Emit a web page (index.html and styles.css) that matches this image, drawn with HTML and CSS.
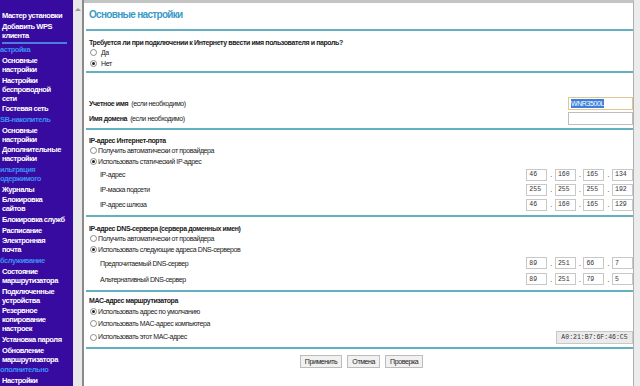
FILE: index.html
```html
<!DOCTYPE html>
<html lang="ru">
<head>
  <meta charset="UTF-8">
  <title>Основные настройки</title>
  <link rel="stylesheet" href="styles.css">
</head>
<body>
  <div class="page">
    <div class="nav">
      <div class="item">Мастер установки</div>
      <div class="item">Добавить WPS<br>клиента</div>
      <div class="sep"></div>
      <div class="head">астройка</div>
      <div class="item">Основные<br>настройки</div>
      <div class="item">Настройки<br>беспроводной<br>сети</div>
      <div class="item">Гостевая сеть</div>
      <div class="head">SB-накопитель</div>
      <div class="item">Основные<br>настройки</div>
      <div class="item">Дополнительные<br>настройки</div>
      <div class="head">ильтрация<br>одержимого</div>
      <div class="item">Журналы</div>
      <div class="item">Блокировка<br>сайтов</div>
      <div class="item">Блокировка служб</div>
      <div class="item">Расписание</div>
      <div class="item">Электронная<br>почта</div>
      <div class="head">бслуживание</div>
      <div class="item">Состояние<br>маршрутизатора</div>
      <div class="item">Подключенные<br>устройства</div>
      <div class="item">Резервное<br>копирование<br>настроек</div>
      <div class="item">Установка пароля</div>
      <div class="item">Обновление<br>маршрутизатора</div>
      <div class="head">ополнительно</div>
      <div class="item">Настройки</div>
    </div>
    <div class="scroll">
      <div class="arrow"></div>
    </div>

    <div class="main">
      <div class="title">Основные настройки</div>
      <div class="line"></div>

      <div class="row q">Требуется ли при подключении к Интернету ввести имя пользователя и пароль?</div>
      <div class="row opt"><span class="radio"></span>Да</div>
      <div class="row opt"><span class="radio on"></span>Нет</div>
      <div class="line"></div>

      <div class="row field first">
        <span><b>Учетное имя</b>&nbsp; (если необходимо)</span>
        <span class="text focus"><span class="sel">WNR3500L</span></span>
      </div>
      <div class="row field">
        <span><b>Имя домена</b>&nbsp; (если необходимо)</span>
        <span class="text"></span>
      </div>
      <div class="line"></div>

      <div class="row q sub">IP-адрес Интернет-порта</div>
      <div class="row opt sm"><span class="radio"></span>Получить автоматически от провайдера</div>
      <div class="row opt sm"><span class="radio on"></span>Использовать статический IP-адрес</div>
      <div class="row ip">
        <span class="label">IP-адрес</span>
        <span class="quad"><span class="box">46</span>.<span class="box">160</span>.<span class="box">165</span>.<span class="box">134</span></span>
      </div>
      <div class="row ip">
        <span class="label">IP-маска подсети</span>
        <span class="quad"><span class="box">255</span>.<span class="box">255</span>.<span class="box">255</span>.<span class="box">192</span></span>
      </div>
      <div class="row ip">
        <span class="label">IP-адрес шлюза</span>
        <span class="quad"><span class="box">46</span>.<span class="box">160</span>.<span class="box">165</span>.<span class="box">129</span></span>
      </div>
      <div class="line"></div>

      <div class="row q sub dns">IP-адрес DNS-сервера (сервера доменных имен)</div>
      <div class="row opt sm"><span class="radio"></span>Получить автоматически от провайдера</div>
      <div class="row opt sm"><span class="radio on"></span>Использовать следующие адреса DNS-серверов</div>
      <div class="row ip tall">
        <span class="label">Предпочитаемый DNS-сервер</span>
        <span class="quad"><span class="box">89</span>.<span class="box">251</span>.<span class="box">66</span>.<span class="box">7</span></span>
      </div>
      <div class="row ip tall">
        <span class="label">Альтернативный DNS-сервер</span>
        <span class="quad"><span class="box">89</span>.<span class="box">251</span>.<span class="box">79</span>.<span class="box">5</span></span>
      </div>
      <div class="line"></div>

      <div class="row q sub mac">MAC-адрес маршрутизатора</div>
      <div class="row opt sm mid"><span class="radio on"></span>Использовать адрес по умолчанию</div>
      <div class="row opt sm mid"><span class="radio"></span>Использовать MAC-адрес компьютера</div>
      <div class="row opt sm field">
        <span><span class="radio"></span>Использовать этот MAC-адрес</span>
        <span class="macbox">A0:21:B7:6F:46:C5</span>
      </div>
      <div class="line"></div>

      <div class="buttons">
        <button>Применить</button>
        <button>Отмена</button>
        <button>Проверка</button>
      </div>
    </div>
    <div class="gutter"></div>
  </div>
</body>
</html>
```

FILE: styles.css
```css
body {
  margin: 0;
  font-family: "Liberation Sans", Arial, sans-serif;
  background: #fff;
  overflow: hidden;
}
.page {
  display: flex;
  height: 386px;
}
.nav {
  width: 73px;
  flex: none;
  background: #370b9f;
  color: #fff;
  font-size: 7.5px;
  font-weight: bold;
  letter-spacing: -0.45px;
  line-height: 9px;
  padding-top: 10px;
  overflow: hidden;
  white-space: nowrap;
}
.nav .item {
  padding: 0.85px 0 0.85px 2px;
}
.nav .head {
  color: #3d8ff5;
  padding: 0.85px 0;
}
.nav .sep {
  height: 2px;
  background: #4b7fe0;
  margin: 2px 6px 0 2px;
}
.scroll {
  width: 9px;
  flex: none;
  background: #e9e9e9;
  border-right: 2px solid #8a8a8a;
}
.scroll .arrow {
  width: 0;
  height: 0;
  margin: 8px auto 0;
  border-left: 3px solid transparent;
  border-right: 3px solid transparent;
  border-bottom: 3px solid #9a9a9a;
}
.main {
  flex: 1;
  border-top: 3px solid #c4c4c4;
  border-right: 1px solid #b0b0b0;
  padding: 0 0 0 2px;
  color: #222;
  font-size: 7px;
  letter-spacing: -0.4px;
}
.gutter {
  width: 6px;
  flex: none;
  background: #ececec;
}
.title {
  height: 22px;
  margin-bottom: 4px;
  display: flex;
  align-items: center;
  padding-left: 3px;
  font-size: 10px;
  font-weight: bold;
  letter-spacing: -0.7px;
  color: #3a9ac8;
}
.line {
  height: 2px;
  background: #62b0c2;
  margin-top: 2px;
}
.row {
  display: flex;
  align-items: center;
  padding-left: 3px;
  white-space: nowrap;
}
.q {
  height: 10px;
  margin-top: 6px;
  font-weight: bold;
}
.q.sub {
  margin-top: 5px;
}
.q.dns {
  margin-top: 6px;
}
.q.mac {
  margin-top: 3px;
}
.opt {
  height: 11px;
}
.opt.mid {
  height: 12px;
}
.radio {
  display: inline-block;
  box-sizing: border-box;
  width: 7px;
  height: 7px;
  border: 1px solid #8c8c8c;
  border-radius: 50%;
  background: #fff;
  margin: 0 4px 0 1px;
  position: relative;
  vertical-align: middle;
}
.opt.sm .radio {
  margin-right: 1px;
}
.radio.on::after {
  content: "";
  position: absolute;
  left: 1px;
  top: 1px;
  width: 3px;
  height: 3px;
  border-radius: 50%;
  background: #222;
}
.field {
  height: 14px;
  justify-content: space-between;
  margin-top: 1px;
}
.field.first {
  margin-top: 23px;
}
.line + .row.field:not(.first),
.field + .line,
.ip + .line,
.tall + .line {
  margin-top: 3px;
}
.text {
  box-sizing: border-box;
  width: 65px;
  height: 13px;
  border: 1px solid #bdbdbd;
  background: #fff;
  padding: 1px 2px;
  display: flex;
  align-items: center;
}
.text.focus {
  border-color: #e0c690;
}
.sel {
  background: #3c7fdc;
  color: #fff;
  font-size: 7px;
  line-height: 9px;
}
.ip {
  height: 15px;
  justify-content: space-between;
}
.ip.tall {
  height: 16px;
}
.label {
  padding-left: 11px;
}
.quad {
  display: flex;
  align-items: center;
  gap: 3px;
  font-size: 7px;
}
.box {
  box-sizing: border-box;
  width: 21px;
  height: 12px;
  border: 1px solid #c8c8c8;
  font-family: "Liberation Mono", monospace;
  font-size: 6.5px;
  letter-spacing: 0;
  padding-left: 2px;
  display: flex;
  align-items: center;
  color: #333;
}
.macbox {
  box-sizing: border-box;
  width: 77px;
  height: 13px;
  border: 1px solid #c8c8c8;
  background: #ebebeb;
  font-family: "Liberation Mono", monospace;
  font-size: 6.5px;
  letter-spacing: 0;
  display: flex;
  align-items: center;
  justify-content: center;
  color: #333;
}
.buttons {
  display: flex;
  justify-content: center;
  gap: 5px;
  margin-top: 6px;
  padding-left: 4px;
}
.buttons button {
  height: 13px;
  padding: 0 4px;
  border: 1px solid #bcbcbc;
  background: #f1f1f1;
  font-family: "Liberation Sans", Arial, sans-serif;
  font-size: 7px;
  letter-spacing: -0.4px;
  color: #222;
  line-height: 11px;
}
```
